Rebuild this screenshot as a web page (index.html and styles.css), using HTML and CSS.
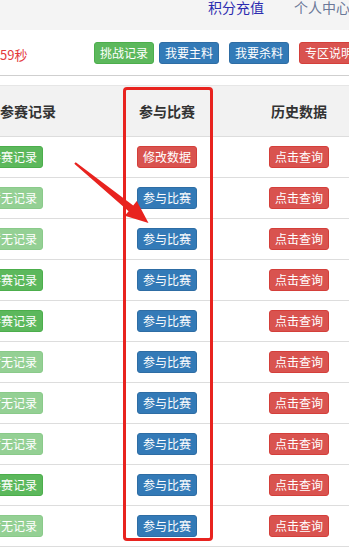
FILE: index.html
```html
<!DOCTYPE html>
<html>
<head>
    <meta charset="utf-8" />
    <title>专区</title>
    <link rel="stylesheet" href="styles.css">
</head>
<body>
    <div class="topnav">
        <a class="nav-link primary" href="#">积分充值</a>
        <a class="nav-link" href="#">个人中心</a>
    </div>

    <div class="toolbar">
        <span class="countdown">59秒</span>
        <div class="tools">
            <span class="btn-pair">
                <a class="btn btn-green" href="#">挑战记录</a>
                <a class="btn btn-blue" href="#">我要主料</a>
            </span>
            <a class="btn btn-blue" href="#">我要杀料</a>
            <a class="btn btn-red" href="#">专区说明</a>
        </div>
    </div>

    <div class="table" id="table">
        <div class="row head">
            <div class="cell first">参赛记录</div>
            <div class="cell">参与比赛</div>
            <div class="cell">历史数据</div>
        </div>
    </div>

    <!-- annotation drawn on top of the screenshot -->
    <div class="mark-box"></div>
    <svg class="mark-arrow" width="349" height="549" viewBox="0 0 349 549">
        <polygon fill="#e8231f" points="74.3,163.7 128.6,211.3 124.8,215.8 148.5,223 136.8,201 133.2,205.4 75.7,162.3" />
    </svg>

    <script>
        // 1 = has record, 0 = no record
        const records = [1, 0, 0, 1, 1, 0, 0, 0, 1, 0];
        const table = document.getElementById("table");

        records.forEach(function(has, i) {
            const row = document.createElement("div");
            row.className = "row";

            const rec = has
                ? '<a class="btn btn-green" href="#">参赛记录</a>'
                : '<a class="btn btn-green disabled" href="#">暂无记录</a>';
            const join = i == 0
                ? '<a class="btn btn-red" href="#">修改数据</a>'
                : '<a class="btn btn-blue" href="#">参与比赛</a>';

            row.innerHTML =
                '<div class="cell first">' + rec + '</div>' +
                '<div class="cell">' + join + '</div>' +
                '<div class="cell"><a class="btn btn-red" href="#">点击查询</a></div>';
            table.appendChild(row);
        });
    </script>
</body>
</html>
```

FILE: styles.css
```css
html,
body {
    margin: 0;
    overflow: hidden;
}

body {
    width: 349px;
    height: 549px;
    font-family: "Noto Sans CJK SC", "Liberation Sans", sans-serif;
    font-size: 14px;
    color: #333;
    background: #fff;
}

a {
    text-decoration: none;
}

/* top navigation */
.topnav {
    height: 30px;
    background: #f4f4f4;
    display: flex;
    padding-left: 208px;
    gap: 30px;
    white-space: nowrap;
}

.nav-link {
    font-size: 14px;
    line-height: 14px;
    color: #6b7898;
}

.nav-link.primary {
    color: #2c2cb0;
}

/* countdown and tool buttons */
.toolbar {
    height: 45px;
    border-bottom: 1px solid #cfcfcf;
    display: flex;
    align-items: center;
    white-space: nowrap;
}

.countdown {
    width: 94px;
    flex-shrink: 0;
    color: #e4393c;
    font-size: 13px;
    margin-top: 4px;
}

.tools {
    display: flex;
    gap: 10px;
}

.btn-pair {
    display: flex;
    gap: 5px;
}

/* buttons */
.btn {
    display: inline-block;
    flex-shrink: 0;
    width: 60px;
    box-sizing: border-box;
    padding: 1px 0;
    font-size: 12px;
    line-height: 18px;
    text-align: center;
    color: #fff;
    border: 1px solid transparent;
    border-radius: 3px;
    white-space: nowrap;
}

.btn-green {
    background: #5cb85c;
    border-color: #4cae4c;
}

.btn-green.disabled {
    opacity: .65;
}

.btn-blue {
    background: #337ab7;
    border-color: #2e6da4;
}

.btn-red {
    background: #d9534f;
    border-color: #d43f3a;
}

/* table */
.table {
    margin-top: 9px;
    border-top: 1px solid #e6e6e6;
    width: 365px;
}

.row {
    display: grid;
    grid-template-columns: 101px 132px 132px;
    height: 40px;
    border-bottom: 1px solid #dddddd;
    align-items: center;
}

.row.head {
    height: 50px;
    background: #f2f2f2;
    font-weight: bold;
    font-size: 14px;
}

.cell {
    text-align: center;
}

.cell.first {
    text-align: left;
}

.cell.first .btn {
    margin-left: -17px;
}

/* annotation overlay */
.mark-box {
    position: absolute;
    left: 123px;
    top: 87px;
    width: 84px;
    height: 448px;
    border: 3px solid #e8231f;
    border-radius: 4px;
}

.mark-arrow {
    position: absolute;
    left: 0;
    top: 0;
}
```
